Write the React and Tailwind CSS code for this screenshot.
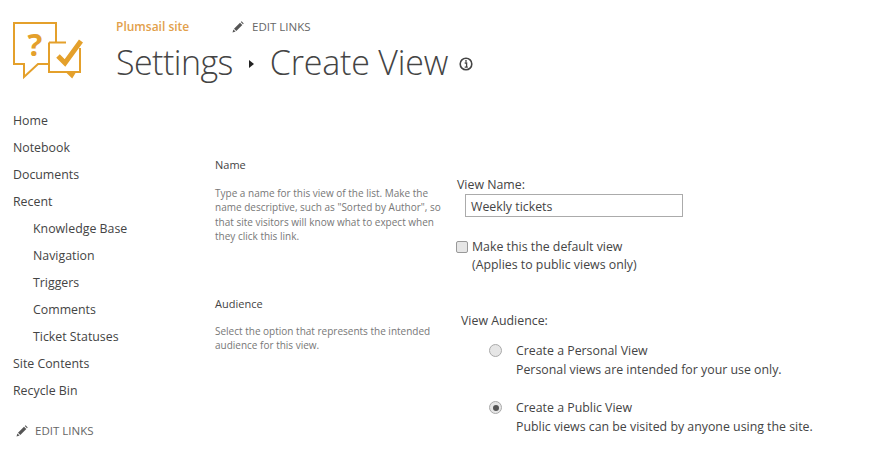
function Pencil({ className }) {
  return (
    <svg viewBox="0 0 12 12" className={className} fill="#555">
      <path d="M0.5 11.5 L1.4 8.4 L3.6 10.6 Z" />
      <path d="M2 7.7 L8 1.7 L10.3 4 L4.3 10 Z" />
      <path d="M8.8 0.9 L9.6 0.3 L11.7 2.4 L11 3.2 Z" />
    </svg>
  );
}

function Logo() {
  return (
    <svg viewBox="0 0 70 60" className="w-[70px] h-[60px] shrink-0">
      <g fill="none" stroke="#e4a02b" strokeWidth="2">
        <path d="M43 20 V1 H1 V42 H11 V55 L25 42 H35" />
        <path d="M36 20.5 H53 M67 26 V50 H36 V20.5" />
        <path d="M54 50 L59 55 L62 50" fill="#e4a02b" />
      </g>
      <path d="M45 34 L52 41 L68 19" fill="none" stroke="#e4a02b" strokeWidth="5" />
      <text x="22" y="34" textAnchor="middle" fontFamily="'Open Sans', sans-serif" fontWeight="700" fontSize="31" fill="#e4a02b">?</text>
    </svg>
  );
}

const nav = [
  ["Home", false],
  ["Notebook", false],
  ["Documents", false],
  ["Recent", false],
  ["Knowledge Base", true],
  ["Navigation", true],
  ["Triggers", true],
  ["Comments", true],
  ["Ticket Statuses", true],
  ["Site Contents", false],
  ["Recycle Bin", false],
];

export default function App() {
  return (
    <div className="w-[869px] h-[464px] overflow-hidden bg-white text-[#444] font-['Open_Sans',sans-serif] text-[12.35px]">
      <header className="flex h-[108px] pl-[13px] pt-[22px]">
        <Logo />
        <div className="ml-[33px] -mt-[22px] flex flex-col">
          <div className="flex items-center h-[54px]">
            <span className="w-[116px] font-semibold text-[12px] text-[#e2a04a]">Plumsail site</span>
            <Pencil className="w-3 h-3" />
            <span className="ml-2 text-[11.5px] text-[#666]">EDIT LINKS</span>
          </div>
          <div className="flex items-center -mt-[13px] text-[34px] leading-[42px] font-light text-[#444]">
            <span className="tracking-[-0.55px]">Settings</span>
            <span className="ml-[16px] mr-[16px] w-0 h-0 border-y-[4px] border-y-transparent border-l-[5px] border-l-[#222] mt-[4px]" />
            <span className="tracking-[-0.2px]">Create View</span>
            <svg viewBox="0 0 14 14" className="w-[14px] h-[14px] ml-[11px] mt-[4px]" fill="none">
              <circle cx="7" cy="7" r="5.8" stroke="#444" strokeWidth="1.6" />
              <path d="M5.7 6 H7.6 V10 M5.7 10.2 H8.8" stroke="#444" strokeWidth="1.3" />
              <circle cx="7" cy="3.9" r="0.9" fill="#444" />
            </svg>
          </div>
        </div>
      </header>
      <div className="flex">
        <nav className="w-[215px] shrink-0 pl-[13px]">
          {nav.map(([label, sub]) => (
            <div key={label} className={`h-[27px] flex items-center ${sub ? "pl-[20px]" : ""}`}>{label}</div>
          ))}
          <div className="flex items-center mt-[12px] h-[27px] pl-[3px] text-[11.5px] text-[#666]">
            <Pencil className="w-3 h-3" />
            <span className="ml-[7px]">EDIT LINKS</span>
          </div>
        </nav>
        <main className="flex-1 pt-[49px]">
          <section className="flex h-[139px]">
            <div className="w-[242px] shrink-0">
              <div className="text-[11px] h-4 leading-4 text-[#444]">Name</div>
              <p className="mt-[13px] w-[230px] text-[10px] leading-[14.4px] text-[#777]">
                Type a name for this view of the list. Make the name descriptive, such as "Sorted by Author", so that site visitors will know what to expect when they click this link.
              </p>
            </div>
            <div className="pt-[19px]">
              <div className="h-[18px] leading-[18px]">View Name:</div>
              <div className="ml-[8px] w-[218px] h-[23px] border border-[#ababab] pl-[5px] leading-[23px]">Weekly tickets</div>
              <label className="flex mt-[21px] -ml-[1px]">
                <span className="w-[12px] h-[12px] mt-[3px] rounded-[2px] border border-[#999] bg-[#e6e6e6]" />
                <span className="ml-[4px] leading-[18px]">Make this the default view<br />(Applies to public views only)</span>
              </label>
            </div>
          </section>
          <section className="flex">
            <div className="w-[242px] shrink-0">
              <div className="text-[11px] h-4 leading-4 text-[#444]">Audience</div>
              <p className="mt-[12px] w-[225px] text-[10px] leading-[14.4px] text-[#777]">
                Select the option that represents the intended audience for this view.
              </p>
            </div>
            <div className="pt-[16px] pl-[4px]">
              <div className="h-[18px] leading-[18px]">View Audience:</div>
              <div className="flex mt-[11px] pl-[28px]">
                <span className="w-[13px] h-[13px] mt-[3px] rounded-full border border-[#aaa] bg-[#e6e6e6]" />
                <div className="ml-[14px] leading-[19px]">Create a Personal View<br />Personal views are intended for your use only.</div>
              </div>
              <div className="flex mt-[19px] pl-[28px]">
                <span className="flex items-center justify-center w-[13px] h-[13px] mt-[3px] rounded-full border border-[#aaa] bg-[#e6e6e6]">
                  <span className="w-[6px] h-[6px] rounded-full bg-[#555]" />
                </span>
                <div className="ml-[14px] leading-[19px]">Create a Public View<br />Public views can be visited by anyone using the site.</div>
              </div>
            </div>
          </section>
        </main>
      </div>
    </div>
  );
}
